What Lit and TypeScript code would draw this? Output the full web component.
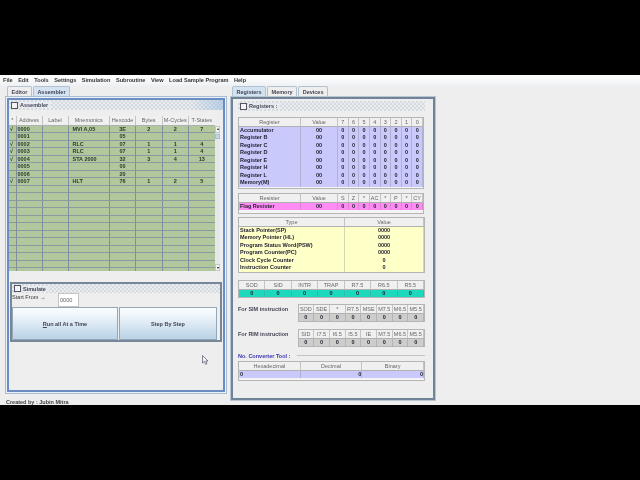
import { LitElement, html, css } from "lit";
import { customElement } from "lit/decorators.js";

type Row = string[];
const asm: Row[] = [
  ["√", "0000", "", "MVI A,05", "3E", "2", "2", "7"],
  ["", "0001", "", "", "05", "", "", ""],
  ["√", "0002", "", "RLC", "07", "1", "1", "4"],
  ["√", "0003", "", "RLC", "07", "1", "1", "4"],
  ["√", "0004", "", "STA 2000", "32", "3", "4", "13"],
  ["", "0005", "", "", "00", "", "", ""],
  ["", "0006", "", "", "20", "", "", ""],
  ["√", "0007", "", "HLT", "76", "1", "2", "5"],
  ...Array.from({ length: 12 }, () => ["", "", "", "", "", "", "", ""]),
];
const regs = ["Accumulator", "Register B", "Register C", "Register D", "Register E", "Register H", "Register L", "Memory(M)"];
const zeros = Array(8).fill("0");

function grid(cols: string, head: string[], rows: Row[], cls: string, leftCols: number[] = []) {
  return html`<div class="tbl ${cls}" style="grid-template-columns:${cols}">
    ${head.map((h) => html`<div class="th">${h}</div>`)}
    ${rows.flatMap((r) => r.map((c, i) => html`<div class="td ${leftCols.includes(i) ? "l" : ""}">${c}</div>`))}
  </div>`;
}

@customElement("app-root")
export class AppRoot extends LitElement {
  static styles = css`
    :host { display: block; width: 640px; height: 480px; background: #000; font-family: "Liberation Sans", Arial, sans-serif; font-size: 5.5px; color: #333; overflow: hidden; }
    * { box-sizing: border-box; }
    .app { position: relative; margin-top: 75px; height: 330px; background: #eee; display: flex; flex-direction: column; filter: blur(0.3px); }
    .menu { display: flex; gap: 5.5px; height: 11px; padding: 2px 0 0 3px; background: linear-gradient(#fff, #eef1f4); font-weight: bold; line-height: 7px; color: #333; font-size: 5.6px; }
    .main { display: flex; height: 309px; padding-left: 5px; gap: 3px; align-items: flex-start; }
    .col { display: flex; flex-direction: column; }
    .left { width: 222px; }
    .right { width: 206px; }
    .tabs { display: flex; height: 10px; padding-left: 2px; gap: 1px; font-weight: bold; color: #445; line-height: 10px; }
    .tab { padding: 0 3.5px; background: #eee; border: 1px solid #b4c2d0; border-bottom: 0; border-radius: 2px 2px 0 0; }
    .tab.on { background: #d3e3f1; }
    .pane-l { height: 298px; border: 1px solid #a9bcd0; padding: 1px; background: #eaf1f8; }
    .pane-r { height: 305px; border: 1px solid #b8c4cf; background: #e4e9ee; }
    .frame-l { height: 294px; border: 2px solid #6c8cc4; background: #eee; display: flex; flex-direction: column; }
    .frame-r { height: 303px; border: 2px solid #6f8498; background: #eee; padding: 2px 8px 0 5px; display: flex; flex-direction: column; }
    .title { height: 10px; display: flex; align-items: center; gap: 2px; padding-left: 2px; font-weight: bold; color: #445; flex: none;
      background: repeating-conic-gradient(#d4dade 0 25%, #eaedef 0 50%) 0 0 / 4px 4px; }
    .frame-l > .title { background: linear-gradient(90deg, transparent 85%, rgba(150, 185, 225, .55)), repeating-conic-gradient(#d4dade 0 25%, #eaedef 0 50%) 0 0 / 4px 4px; }
    .title span { background: #e6ebf0; padding-right: 3px; }
    .box { width: 7px; height: 7px; border: 1px solid #556; background: #f4f4f4; flex: none; }
    .scroll { display: flex; margin: 6px 3px 0 0; height: 155px; flex: none; }
    .tbl { display: grid; align-content: start; border: 1px solid #b5b5b5; background: #f4f4f4; flex: none; overflow: hidden; }
    .th { height: 8.5px; line-height: 8px; text-align: center; color: #666; background: #f0f0f0; border-right: 1px solid #c4c4c4; border-bottom: 1px solid #b0b0b0; white-space: nowrap; overflow: hidden; }
    .td { height: 7.5px; line-height: 7px; text-align: center; font-weight: bold; color: #223; white-space: nowrap; overflow: hidden; border-right: 1px solid rgba(120, 120, 120, .3); }
    .td.l { text-align: left; padding-left: 1px; }
    .asm { width: 206px; height: 155px; border: 0; background: #b2c89c; }
    .asm .th { height: 9.5px; line-height: 9px; }
    .asm .td { background: #b2c89c; border-right: 1px solid #7e8fa0; border-bottom: 1px solid #8a9aa0; color: #2d3a2a; }
    .asm .td:nth-child(8n + 4) { padding-left: 4px; }
    .sb { width: 7px; background: #e4e8ec; display: flex; flex-direction: column; margin-top: 9.5px; }
    .sb i { display: flex; align-items: center; justify-content: center; height: 7px; background: #f6f6f6; border: 1px solid #c4c4c4; flex: none; }
    .sb i::after { content: ""; border-left: 1.5px solid transparent; border-right: 1.5px solid transparent; }
    .sb i.up::after { border-bottom: 2px solid #111; }
    .sb i.down::after { border-top: 2px solid #111; }
    .sb .thumb { height: 5px; margin-top: 1px; background: #c3d5ea; border: 1px solid #a8bdd6; flex: none; }
    .sb .fill { flex: 1; }
    .sim { margin: 11px 0 0 1px; width: 212px; height: 60px; border: 2px solid #76879a; background: #eee; display: flex; flex-direction: column; flex: none; }
    .sim .title { height: 9px; }
    .start { display: flex; height: 14px; padding-left: 0; color: #333; flex: none; line-height: 9px; font-size: 5.6px; }
    .start b { font-weight: normal; width: 46px; }
    .input { width: 21px; height: 14px; background: #fff; border: 1px solid #c4c4c4; color: #666; line-height: 13px; padding-left: 1px; }
    .btns { display: flex; gap: 1px; height: 33px; }
    .btn { display: flex; align-items: center; justify-content: center; font-weight: bold; color: #445; border: 1px solid #97a6b4; background: linear-gradient(#fafdff, #eef5fa 25%, #b9d2e6); }
    .btn.a { width: 106px; }
    .btn.b { width: 98px; }
    .btn u { text-decoration: underline; }
    .r1 { margin-top: 6px; height: 72px; width: 186px; }
    .r1 .td, .conv .td { background: #c9c9fb; }
    .r2 { margin-top: 4px; height: 21px; width: 186px; }
    .r2 .td { background: #ff8cf4; }
    .r3 { margin-top: 3px; height: 56px; width: 187px; }
    .r3 .td { background: #ffffc8; }
    .r4 { margin-top: 7px; height: 18px; width: 187px; }
    .r4 .td { background: #1cd8bc; }
    .lab { display: flex; width: 187px; margin-top: 6px; justify-content: space-between; flex: none; }
    .lab.rim { margin-top: 7px; }
    .lab p { margin: 2px 0 0; font-weight: bold; color: #445; line-height: 7px; }
    .io { height: 18px; width: 127.5px; }
    .io .td { background: #cdcdcd; height: 8px; }
    .conv-h { display: flex; align-items: center; gap: 6px; margin-top: 5px; height: 7px; flex: none; font-weight: bold; color: #3a34b0; }
    .conv-h hr { flex: none; width: 128px; margin: 0; border: 0; border-top: 1px solid #c4c4c4; }
    .conv-h span { width: 53px; white-space: nowrap; }
    .conv { margin-top: 2px; width: 187px; height: 20px; }
    .conv .r { text-align: right; }
    .foot { height: 10px; padding: 3.5px 0 0 6px; font-weight: bold; color: #444; line-height: 6px; }
    .cursor { position: absolute; left: 202px; top: 280px; }
  `;

  render() {
    const sq = "repeat(8,1fr)";
    return html`<div class="app">
      <div class="menu">
        ${["File", "Edit", "Tools", "Settings", "Simulation", "Subroutine", "View", "Load Sample Program", "Help"].map((m) => html`<span>${m}</span>`)}
      </div>
      <div class="main">
        <div class="col left">
          <div class="tabs"><div class="tab">Editor</div><div class="tab on">Assembler</div></div>
          <div class="pane-l"><div class="frame-l">
            <div class="title"><div class="box"></div><span>Assembler</span></div>
            <div class="scroll">
              ${grid("7.5px 26px 26px 41.5px 26px 26.5px 26.5px 26.5px", ["*", "Address", "Label", "Mnemonics", "Hexcode", "Bytes", "M-Cycles", "T-States"], asm, "asm", [0, 1, 3])}
              <div class="sb"><i class="up"></i><div class="thumb"></div><div class="fill"></div><i class="down"></i></div>
            </div>
            <div class="sim">
              <div class="title"><div class="box"></div><span>Simulate</span></div>
              <div class="start"><b>Start From →</b><div class="input">0000</div></div>
              <div class="btns"><div class="btn a"><span><u>R</u>un all At a Time</span></div><div class="btn b">Step By Step</div></div>
            </div>
          </div></div>
        </div>
        <div class="col right">
          <div class="tabs"><div class="tab on">Registers</div><div class="tab">Memory</div><div class="tab">Devices</div></div>
          <div class="pane-r"><div class="frame-r">
            <div class="title"><div class="box"></div><span>Registers :</span></div>
            ${grid("62px 37px repeat(8,1fr)", ["Register", "Value", "7", "6", "5", "4", "3", "2", "1", "0"], regs.map((r) => [r, "00", ...zeros]), "r1", [0])}
            ${grid("62px 37px repeat(8,1fr)", ["Resister", "Value", "S", "Z", "*", "AC", "*", "P", "*", "CY"], [["Flag Resister", "00", ...zeros]], "r2", [0])}
            ${grid("106px 1fr", ["Type", "Value"], [["Stack Pointer(SP)", "0000"], ["Memory Pointer (HL)", "0000"], ["Program Status Word(PSW)", "0000"], ["Program Counter(PC)", "0000"], ["Clock Cycle Counter", "0"], ["Instruction Counter", "0"]], "r3", [0])}
            ${grid("repeat(7,1fr)", ["SOD", "SID", "INTR", "TRAP", "R7.5", "R6.5", "R5.5"], [Array(7).fill("0")], "r4")}
            <div class="lab"><p>For SIM instruction</p>${grid(sq, ["SOD", "SDE", "*", "R7.5", "MSE", "M7.5", "M6.5", "M5.5"], [zeros], "io")}</div>
            <div class="lab rim"><p>For RIM instruction</p>${grid(sq, ["SID", "I7.5", "I6.5", "I5.5", "IE", "M7.5", "M6.5", "M5.5"], [zeros], "io")}</div>
            <div class="conv-h"><span>No. Converter Tool :</span><hr /></div>
            <div class="tbl conv" style="grid-template-columns:repeat(3,1fr)">
              <div class="th">Hexadecimal</div><div class="th">Decimal</div><div class="th">Binary</div>
              <div class="td l">0</div><div class="td r">0</div><div class="td r">0</div>
            </div>
          </div></div>
        </div>
      </div>
      <div class="foot">Created by : Jubin Mitra</div>
      <svg class="cursor" width="7" height="10" viewBox="0 0 7 10"><path d="M.5.5V8L2.3 6.4 3.6 9.3 5 8.7 3.7 6H6Z" fill="#f4f4f4" stroke="#556" stroke-width=".7"/></svg>
    </div>`;
  }
}
